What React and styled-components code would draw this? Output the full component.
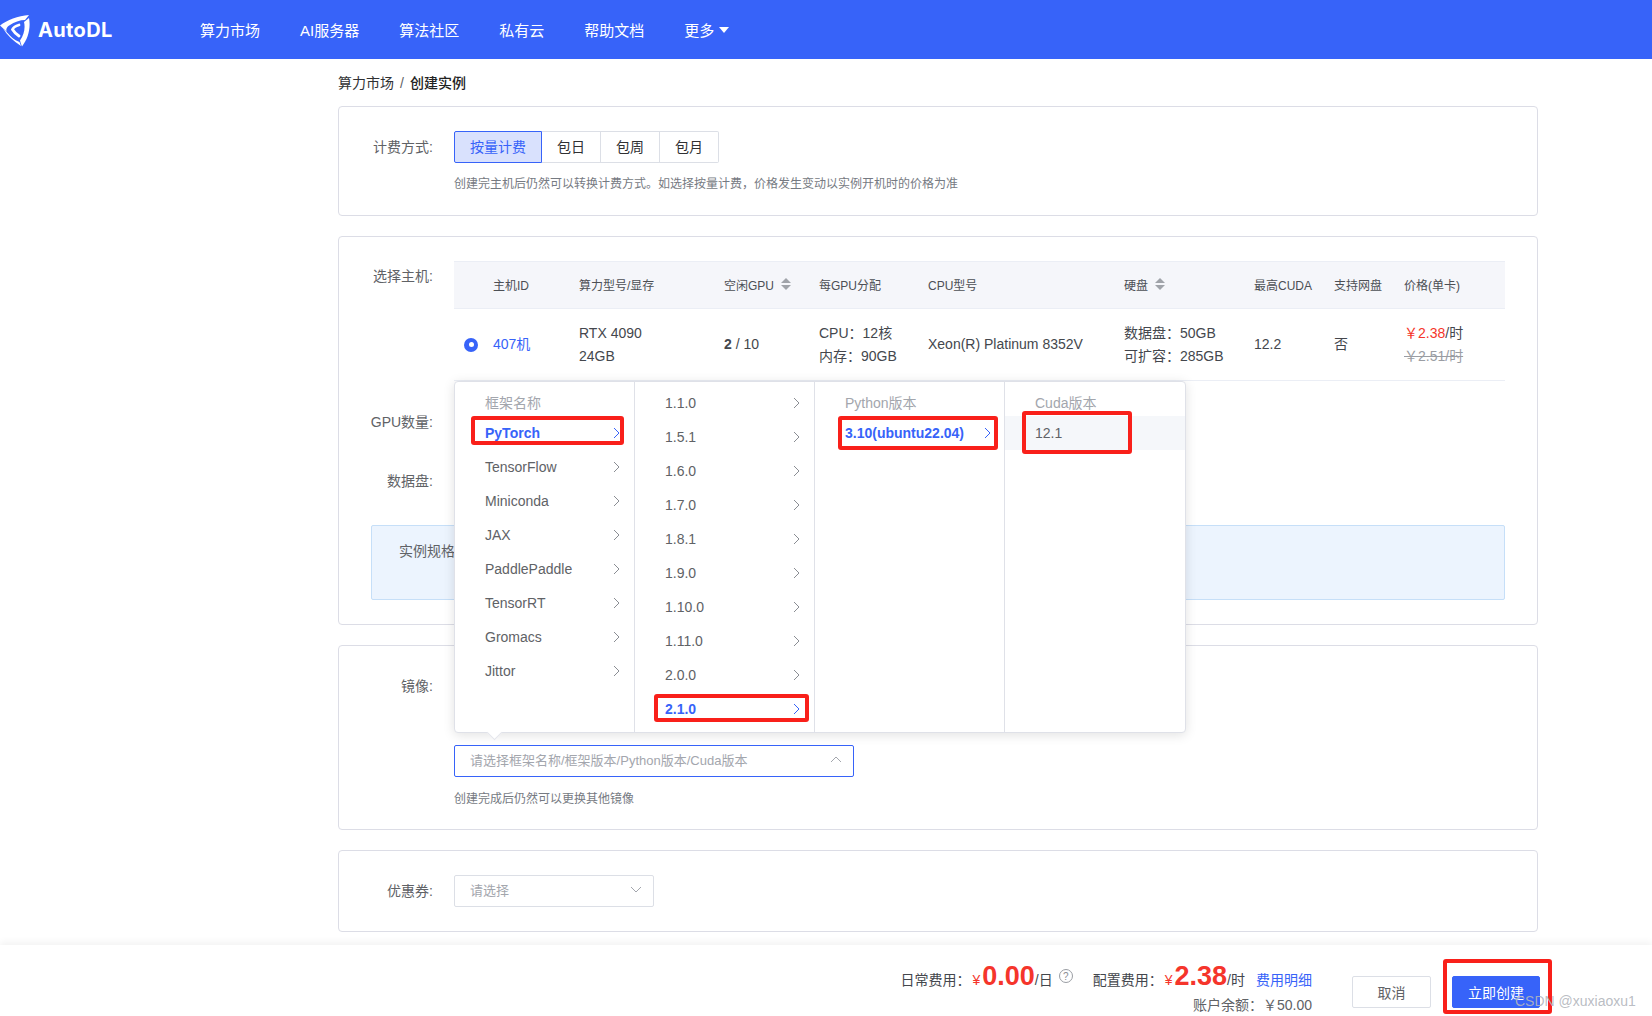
import React from "react";
import styled, { createGlobalStyle } from "styled-components";

const Global = createGlobalStyle`
  html, body { margin: 0; padding: 0; background: #fff; }
  body { font-family: "Liberation Sans", "Noto Sans CJK SC", sans-serif; font-size: 14px; color: #606266; }
  * { box-sizing: border-box; }
`;

const Page = styled.div`
  position: relative;
  width: 1652px;
  height: 1016px;
  overflow: hidden;
  display: flex;
  flex-direction: column;
`;
const Header = styled.header`
  height: 59px;
  flex: none;
  background: #3763f9;
  display: flex;
  align-items: center;
  color: #fff;
`;
const Brand = styled.div`
  width: 200px;
  display: flex;
  align-items: center;
  gap: 8px;
`;
const BrandName = styled.span`
  font-family: Inter, "Liberation Sans", sans-serif;
  font-weight: 700;
  font-size: 20px;
  letter-spacing: 0.35px;
`;
const Nav = styled.nav`
  display: flex;
  align-items: center;
  gap: 40px;
  font-size: 15px;
  margin-top: -1px;
`;
const NavItem = styled.span`
  display: flex;
  align-items: center;
  gap: 5px;
`;
const Caret = styled.i`
  width: 0;
  height: 0;
  border-left: 5px solid transparent;
  border-right: 5px solid transparent;
  border-top: 6px solid #fff;
  margin-top: 2px;
`;
const Main = styled.main`
  flex: none;
  width: 1200px;
  margin-left: 338px;
  height: 886px;
`;
const Crumb = styled.div`
  margin-top: 14px;
  height: 20px;
  line-height: 20px;
  margin-bottom: 13px;
  color: #303133;
`;
const CrumbSep = styled.span`
  margin: 0 6px;
  color: #606266;
`;
const CrumbNow = styled.b`
  font-weight: 500;
  color: #222;
`;
const Card = styled.section`
  border: 1px solid #dcdde6;
  border-radius: 4px;
  padding: 24px 32px ${(p) => p.$pb}px 0;
  margin-bottom: 20px;
  background: #fff;
`;
const Row = styled.div`
  display: grid;
  grid-template-columns: 94px 1fr;
  column-gap: 21px;
  margin-top: ${(p) => p.$mt || 0}px;
  min-height: ${(p) => p.$h || 0}px;
`;
const Label = styled.label`
  text-align: right;
  line-height: ${(p) => p.$lh || 32}px;
  height: ${(p) => p.$lh || 32}px;
  padding-top: ${(p) => (p.$drop ? 1 : 0)}px;
  color: #606266;
`;
const Tabs = styled.div`
  display: flex;
  height: 32px;
`;
const Tab = styled.div`
  width: ${(p) => p.$w}px;
  height: 32px;
  line-height: 30px;
  text-align: center;
  border: 1px solid ${(p) => (p.$on ? "#3763f9" : "#dcdfe6")};
  border-left-width: ${(p) => (p.$on ? 1 : 0)}px;
  background: ${(p) => (p.$on ? "#d9e1fd" : "#fff")};
  color: ${(p) => (p.$on ? "#3763f9" : "#303133")};
  border-radius: ${(p) => (p.$on ? "2px 0 0 2px" : p.$last ? "0 2px 2px 0" : "0")};
`;
const Hint = styled.div`
  margin-top: ${(p) => p.$mt}px;
  height: ${(p) => 30 - p.$mt}px;
  line-height: 20px;
  font-size: 12px;
  color: #767a82;
`;
const TableGrid = styled.div`
  display: grid;
  grid-template-columns: 39px 86px 145px 95px 109px 196px 130px 80px 70px 101px;
  align-items: center;
`;
const Thead = styled(TableGrid)`
  height: 48px;
  padding-bottom: 2px;
  background: #f5f6fa;
  border-top: 1px solid #ebeef5;
  border-bottom: 1px solid #ebeef5;
  font-size: 12px;
  color: #4c4f55;
`;
const Tbody = styled(TableGrid)`
  height: 72px;
  border-bottom: 1px solid #ebeef5;
  line-height: 23px;
  color: #44474d;
`;
const Th = styled.div`
  display: flex;
  align-items: center;
  gap: 7px;
`;
const Sort = styled.span`
  display: inline-flex;
  flex-direction: column;
  gap: 2px;
  &::before, &::after {
    content: "";
    width: 0;
    height: 0;
    border-left: 5px solid transparent;
    border-right: 5px solid transparent;
  }
  &::before { border-bottom: 5px solid #a0a3a9; }
  &::after { border-top: 5px solid #a0a3a9; }
`;
const Radio = styled.span`
  display: block;
  margin-left: 10px;
  width: 14px;
  height: 14px;
  border-radius: 50%;
  background: #3763f9;
  position: relative;
  &::after {
    content: "";
    position: absolute;
    left: 4.5px;
    top: 4.5px;
    width: 5px;
    height: 5px;
    border-radius: 50%;
    background: #fff;
  }
`;
const HostId = styled.span`
  color: #3763f9;
`;
const Price = styled.div`
  color: #f5352b;
  white-space: nowrap;
  & > em { color: #44474d; font-style: normal; }
`;
const OldPrice = styled.div`
  color: #9a9da3;
  text-decoration: line-through;
  white-space: nowrap;
`;
const Notice = styled.div`
  margin: 29px 0 0 32px;
  height: 75px;
  padding: 14px 27px;
  line-height: 22px;
  background: #ecf4fe;
  border: 1px solid #c6dff8;
  border-radius: 2px;
`;
const SelectWrap = styled.div`
  position: relative;
  margin-top: ${(p) => p.$mt || 0}px;
  width: ${(p) => p.$w}px;
`;
const SelectBox = styled.div`
  width: 100%;
  height: 32px;
  padding: 0 11px 3px 15px;
  display: flex;
  align-items: center;
  justify-content: space-between;
  font-size: 13px;
  border: 1px solid ${(p) => (p.$open ? "#3763f9" : "#dcdfe6")};
  border-radius: 2px;
  color: #a3a6ad;
  background: #fff;
`;
const Popover = styled.div`
  position: absolute;
  left: 0;
  bottom: calc(100% + 12px);
  width: 732px;
  height: 352px;
  display: grid;
  grid-template-columns: 180px 180px 190px 180px;
  background: #fff;
  border: 1px solid #dfe1e8;
  border-radius: 4px;
  box-shadow: 0 2px 12px rgba(0, 0, 0, 0.12);
  z-index: 5;
  &::after {
    content: "";
    position: absolute;
    left: 34px;
    bottom: -6px;
    width: 10px;
    height: 10px;
    background: #fff;
    transform: rotate(45deg);
    border-right: 1px solid #e4e6ec;
    border-bottom: 1px solid #e4e6ec;
  }
`;
const Col = styled.div`
  padding-top: 4px;
  border-right: ${(p) => (p.$last ? "none" : "1px solid #dfe1e8")};
`;
const ColTitle = styled.div`
  height: 30px;
  line-height: 34px;
  padding-left: ${(p) => p.$pl}px;
  color: #a3a6ad;
`;
const Item = styled.div`
  height: 34px;
  padding: 0 ${(p) => p.$pr}px 0 ${(p) => p.$pl}px;
  display: flex;
  align-items: center;
  justify-content: space-between;
  color: ${(p) => (p.$on ? "#3763f9" : "#606266")};
  font-weight: ${(p) => (p.$on ? 700 : 400)};
  background: ${(p) => (p.$hover ? "#f5f7fa" : "transparent")};
`;
const Footer = styled.footer`
  position: relative;
  flex: none;
  height: 71px;
  padding: 31px 112px 0 0;
  display: flex;
  justify-content: flex-end;
  gap: 40px;
  background: #fff;
  box-shadow: 0 -3px 7px rgba(0, 0, 0, 0.05);
  z-index: 2;
`;
const Fees = styled.div`
  margin-top: -14px;
  display: flex;
  flex-direction: column;
  align-items: flex-end;
  color: #44474d;
`;
const FeeLine = styled.div`
  height: 32px;
  display: flex;
  align-items: baseline;
  white-space: nowrap;
`;
const Yen = styled.span`
  color: #f5352b;
  margin-left: 2px;
  margin-right: 2px;
`;
const Big = styled.b`
  font-size: 27px;
  line-height: 28px;
  color: #f5352b;
`;
const Help = styled.span`
  display: inline-flex;
  align-self: center;
  align-items: center;
  justify-content: center;
  width: 14px;
  height: 14px;
  margin: 0 20px 0 6px;
  border: 1px solid #9a9da3;
  border-radius: 50%;
  font-size: 10px;
  color: #8a8d93;
`;
const DetailLink = styled.span`
  color: #3763f9;
  margin-left: 11px;
`;
const Balance = styled.div`
  height: 30px;
  line-height: 30px;
  white-space: nowrap;
  color: #606266;
`;
const Buttons = styled.div`
  display: flex;
  gap: 21px;
`;
const Btn = styled.button`
  width: ${(p) => p.$w}px;
  height: 32px;
  border-radius: 2px;
  font: inherit;
  border: 1px solid ${(p) => (p.$primary ? "#3763f9" : "#dcdfe6")};
  background: ${(p) => (p.$primary ? "#3763f9" : "#fff")};
  color: ${(p) => (p.$primary ? "#fff" : "#606266")};
`;
const Watermark = styled.span`
  position: absolute;
  left: 1515px;
  top: 993px;
  font-size: 14px;
  color: rgba(178, 181, 188, 0.9);
  white-space: nowrap;
  z-index: 9;
`;
const RedBox = styled.div`
  position: absolute;
  left: ${(p) => p.$x}px;
  top: ${(p) => p.$y}px;
  width: ${(p) => p.$w}px;
  height: ${(p) => p.$h}px;
  border: 4px solid #f9201a;
  border-radius: 3px;
  z-index: 8;
`;

const Chevron = ({ d = "M1 1l5 5-5 5", color = "#8a8d93", w = 7, h = 12 }) => (
  <svg width={w} height={h} viewBox={`0 0 ${w} ${h}`} fill="none" stroke={color} strokeWidth="1">
    <path d={d} />
  </svg>
);

const Logo = () => (
  <svg width="30" height="34" viewBox="0 0 30 34" fill="#fff">
    <path d="M29 2C18 3 7 7 0 12.500L7 19C5 16 8 13 10 12C14 9 20 7 25 7Z" />
    <path d="M29 5C31 15 28 26 22 33.500C21 31 20.500 29 20 27.500C24 22 25.500 15 24 9Z" />
    <path d="M3 15.500C7 22 13 28 21 33L19.500 29C14 27 10 23 8 20.500Z" />
    <path d="M19 12C15 13 13 15 12.500 16.500C14 19 16 21 19 23" fill="none" stroke="#fff" strokeWidth="2.800" strokeLinecap="round" />
  </svg>
);

const frameworks = ["PyTorch", "TensorFlow", "Miniconda", "JAX", "PaddlePaddle", "TensorRT", "Gromacs", "Jittor"];
const versions = ["1.1.0", "1.5.1", "1.6.0", "1.7.0", "1.8.1", "1.9.0", "1.10.0", "1.11.0", "2.0.0", "2.1.0"];
const navItems = ["算力市场", "AI服务器", "算法社区", "私有云", "帮助文档"];

export default function App() {
  return (
    <Page>
      <Global />
      <Header>
        <Brand>
          <Logo />
          <BrandName>AutoDL</BrandName>
        </Brand>
        <Nav>
          {navItems.map((n) => (
            <NavItem key={n}>{n}</NavItem>
          ))}
          <NavItem>
            更多
            <Caret />
          </NavItem>
        </Nav>
      </Header>
      <Main>
        <Crumb>
          算力市场<CrumbSep>/</CrumbSep>
          <CrumbNow>创建实例</CrumbNow>
        </Crumb>
        <Card $pb={22}>
          <Row>
            <Label>计费方式:</Label>
            <div>
              <Tabs>
                <Tab $on $w={88}>按量计费</Tab>
                <Tab $w={59}>包日</Tab>
                <Tab $w={59}>包周</Tab>
                <Tab $w={59} $last>包月</Tab>
              </Tabs>
              <Hint $mt={11}>创建完主机后仍然可以转换计费方式。如选择按量计费，价格发生变动以实例开机时的价格为准</Hint>
            </div>
          </Row>
        </Card>
        <Card $pb={24}>
          <Row>
            <Label $lh={30}>选择主机:</Label>
            <div>
              <Thead>
                <span />
                <Th>主机ID</Th>
                <Th>算力型号/显存</Th>
                <Th>空闲GPU<Sort /></Th>
                <Th>每GPU分配</Th>
                <Th>CPU型号</Th>
                <Th>硬盘<Sort /></Th>
                <Th>最高CUDA</Th>
                <Th>支持网盘</Th>
                <Th>价格(单卡)</Th>
              </Thead>
              <Tbody>
                <Radio />
                <HostId>407机</HostId>
                <div>RTX 4090<br />24GB</div>
                <div><b>2</b> / 10</div>
                <div>CPU：12核<br />内存：90GB</div>
                <div>Xeon(R) Platinum 8352V</div>
                <div>数据盘：50GB<br />可扩容：285GB</div>
                <div>12.2</div>
                <div>否</div>
                <div>
                  <Price>￥2.38<em>/时</em></Price>
                  <OldPrice>￥2.51/时</OldPrice>
                </div>
              </Tbody>
            </div>
          </Row>
          <Row $mt={24} $h={32}><Label $drop>GPU数量:</Label></Row>
          <Row $mt={27} $h={32}><Label $drop>数据盘:</Label></Row>
          <Notice>实例规格</Notice>
        </Card>
        <Card $pb={22}>
          <Row>
            <Label $lh={30} $drop>镜像:</Label>
            <div>
              <SelectWrap $mt={75} $w={400}>
                <Popover>
                  <Col>
                    <ColTitle $pl={30}>框架名称</ColTitle>
                    {frameworks.map((f, i) => (
                      <Item key={f} $pl={30} $pr={14} $on={i === 0}>
                        {f}
                        <Chevron color={i === 0 ? "#3763f9" : "#8a8d93"} />
                      </Item>
                    ))}
                  </Col>
                  <Col>
                    {versions.map((v, i) => (
                      <Item key={v} $pl={30} $pr={14} $on={i === 9}>
                        {v}
                        <Chevron color={i === 9 ? "#3763f9" : "#8a8d93"} />
                      </Item>
                    ))}
                  </Col>
                  <Col>
                    <ColTitle $pl={30}>Python版本</ColTitle>
                    <Item $pl={30} $pr={13} $on>
                      3.10(ubuntu22.04)
                      <Chevron color="#3763f9" />
                    </Item>
                  </Col>
                  <Col $last>
                    <ColTitle $pl={30}>Cuda版本</ColTitle>
                    <Item $pl={30} $pr={10} $hover>12.1</Item>
                  </Col>
                </Popover>
                <SelectBox $open>
                  请选择框架名称/框架版本/Python版本/Cuda版本
                  <Chevron w={12} h={7} color="#a3a6ad" d="M1 6l5-5 5 5" />
                </SelectBox>
              </SelectWrap>
              <Hint $mt={12}>创建完成后仍然可以更换其他镜像</Hint>
            </div>
          </Row>
        </Card>
        <Card $pb={24}>
          <Row>
            <Label>优惠券:</Label>
            <SelectWrap $w={200}>
              <SelectBox>
                请选择
                <Chevron w={12} h={7} color="#a3a6ad" d="M1 1l5 5 5-5" />
              </SelectBox>
            </SelectWrap>
          </Row>
        </Card>
      </Main>
      <Footer>
        <Fees>
          <FeeLine>
            日常费用：<Yen>¥</Yen><Big>0.00</Big>/日
            <Help>?</Help>
            配置费用：<Yen>¥</Yen><Big>2.38</Big>/时
            <DetailLink>费用明细</DetailLink>
          </FeeLine>
          <Balance>账户余额：￥50.00</Balance>
        </Fees>
        <Buttons>
          <Btn $w={79}>取消</Btn>
          <Btn $w={88} $primary>立即创建</Btn>
        </Buttons>
      </Footer>
      <RedBox $x={471} $y={416} $w={153} $h={29} />
      <RedBox $x={838} $y={416} $w={160} $h={34} />
      <RedBox $x={1022} $y={411} $w={110} $h={43} />
      <RedBox $x={654} $y={694} $w={155} $h={28} />
      <RedBox $x={1443} $y={959} $w={109} $h={55} />
      <Watermark>CSDN @xuxiaoxu1</Watermark>
    </Page>
  );
}
